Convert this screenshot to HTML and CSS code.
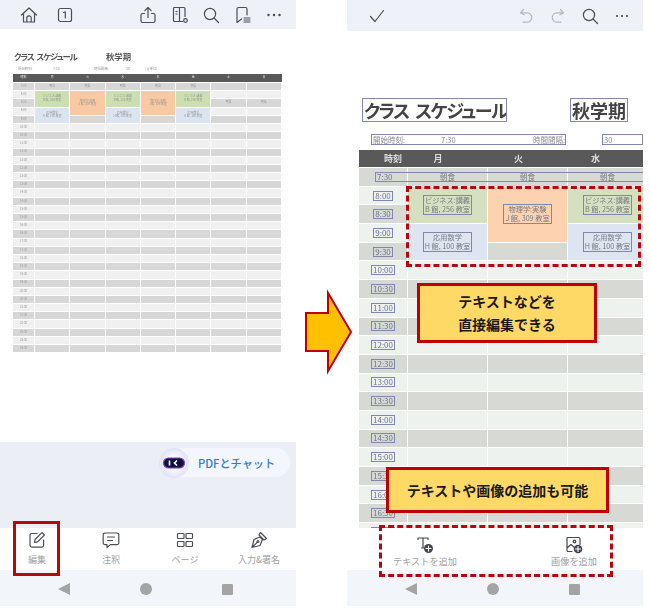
FILE: index.html
```html
<!DOCTYPE html>
<html lang="ja">
<head>
<meta charset="utf-8">
<title>PDF 編集</title>
<link rel="stylesheet" href="styles.css">
</head>
<body>
<main class="stage">

<section class="phone">
  <header class="topbar topbar-left">
    <div class="group group-a">
      <svg class="ico" viewBox="0 0 18 18"><path d="M1.500 9 9 2l7.500 7M3.500 7.500V16h11V7.500M6.800 16v-4a2.200 2.200 0 0 1 4.400 0v4"/></svg>
      <svg class="ico" viewBox="0 0 18 18"><rect x="2.500" y="2.500" width="13" height="13" rx="2"/><path d="M7.500 6.500 9.300 5.800V12"/></svg>
    </div>
    <div class="group group-b">
      <svg class="ico" viewBox="0 0 18 18"><path d="M9 11.500V1.500M5.800 4.700 9 1.500l3.200 3.200M5.500 7.500H3.500a1.500 1.500 0 0 0-1.500 1.500v6a1.500 1.500 0 0 0 1.500 1.500h11a1.500 1.500 0 0 0 1.500-1.500V9a1.500 1.500 0 0 0-1.500-1.500h-2"/></svg>
      <svg class="ico" viewBox="0 0 18 18"><path d="M12 15.500H3.500a1 1 0 0 1-1-1v-12a1 1 0 0 1 1-1h9.500a1 1 0 0 1 1 1v8M8.500 1.500v14M5 5.500h1.200M5 8h1.200"/><circle cx="14.500" cy="14.500" r="1.800"/></svg>
      <svg class="ico" viewBox="0 0 18 18"><circle cx="8" cy="8" r="5.600"/><path d="m12 12 4.500 4.500"/></svg>
      <svg class="ico" viewBox="0 0 18 18"><path d="M7.500 13 3 16.500V3a1.500 1.500 0 0 1 1.500-1.500h7A1.500 1.500 0 0 1 13 3v6M10 12h6M10 14h6M10 16h6"/></svg>
      <svg class="ico" viewBox="0 0 18 18"><circle class="dot" cx="3.500" cy="9" r="1.200"/><circle class="dot" cx="9" cy="9" r="1.200"/><circle class="dot" cx="14.500" cy="9" r="1.200"/></svg>
    </div>
  </header>

  <div class="doc doc-small">
    <div class="titles-s"><h1>クラス スケジュール</h1><h2>秋学期</h2></div>
    <div class="meta-s"><span>開始時刻:</span><span>7:30</span><span>時間間隔:</span><span>30</span><span>(分単位)</span></div>
    <div class="grid-s">
      <b class="hd">時刻</b><b class="hd">月</b><b class="hd">火</b><b class="hd">水</b><b class="hd">木</b><b class="hd">金</b><b class="hd">土</b><b class="hd">日</b>
      <i class="g">7:30</i><i class="g">朝食</i><i class="g">朝食</i><i class="g">朝食</i><i class="g">朝食</i><i class="g">朝食</i><i class="g"></i><i class="g"></i>
      <i class="l">8:00</i><i class="green r2">ビジネス:講義<br>B 館, 256 教室</i><i class="orange r3">物理学:実験<br>J 館, 309 教室</i><i class="green r2">ビジネス:講義<br>B 館, 256 教室</i><i class="orange r3">物理学:実験<br>J 館, 309 教室</i><i class="green r2">ビジネス:講義<br>B 館, 256 教室</i><i class="l"></i><i class="l"></i>
      <i class="g">8:30</i><i class="g">朝食</i><i class="g">朝食</i>
      <i class="l">9:00</i><i class="blue r2">応用数学<br>H 館, 100 教室</i><i class="blue r2">応用数学<br>H 館, 100 教室</i><i class="blue r2">応用数学<br>H 館, 100 教室</i><i class="l"></i><i class="l"></i>
      <i class="g">9:30</i><i class="g"></i><i class="g"></i><i class="g"></i><i class="g"></i>
      <i class="l">10:00</i><i class="l"></i><i class="l"></i><i class="l"></i><i class="l"></i><i class="l"></i><i class="l"></i><i class="l"></i>
      <i class="g">10:30</i><i class="g"></i><i class="g"></i><i class="g"></i><i class="g"></i><i class="g"></i><i class="g"></i><i class="g"></i>
      <i class="l">11:00</i><i class="l"></i><i class="l"></i><i class="l"></i><i class="l"></i><i class="l"></i><i class="l"></i><i class="l"></i>
      <i class="g">11:30</i><i class="g"></i><i class="g"></i><i class="g"></i><i class="g"></i><i class="g"></i><i class="g"></i><i class="g"></i>
      <i class="l">12:00</i><i class="l"></i><i class="l"></i><i class="l"></i><i class="l"></i><i class="l"></i><i class="l"></i><i class="l"></i>
      <i class="g">12:30</i><i class="g"></i><i class="g"></i><i class="g"></i><i class="g"></i><i class="g"></i><i class="g"></i><i class="g"></i>
      <i class="l">13:00</i><i class="l"></i><i class="l"></i><i class="l"></i><i class="l"></i><i class="l"></i><i class="l"></i><i class="l"></i>
      <i class="g">13:30</i><i class="g"></i><i class="g"></i><i class="g"></i><i class="g"></i><i class="g"></i><i class="g"></i><i class="g"></i>
      <i class="l">14:00</i><i class="l"></i><i class="l"></i><i class="l"></i><i class="l"></i><i class="l"></i><i class="l"></i><i class="l"></i>
      <i class="g">14:30</i><i class="g"></i><i class="g"></i><i class="g"></i><i class="g"></i><i class="g"></i><i class="g"></i><i class="g"></i>
      <i class="l">15:00</i><i class="l"></i><i class="l"></i><i class="l"></i><i class="l"></i><i class="l"></i><i class="l"></i><i class="l"></i>
      <i class="g">15:30</i><i class="g"></i><i class="g"></i><i class="g"></i><i class="g"></i><i class="g"></i><i class="g"></i><i class="g"></i>
      <i class="l">16:00</i><i class="l"></i><i class="l"></i><i class="l"></i><i class="l"></i><i class="l"></i><i class="l"></i><i class="l"></i>
      <i class="g">16:30</i><i class="g"></i><i class="g"></i><i class="g"></i><i class="g"></i><i class="g"></i><i class="g"></i><i class="g"></i>
      <i class="l">17:00</i><i class="l"></i><i class="l"></i><i class="l"></i><i class="l"></i><i class="l"></i><i class="l"></i><i class="l"></i>
      <i class="g">17:30</i><i class="g"></i><i class="g"></i><i class="g"></i><i class="g"></i><i class="g"></i><i class="g"></i><i class="g"></i>
      <i class="l">18:00</i><i class="l"></i><i class="l"></i><i class="l"></i><i class="l"></i><i class="l"></i><i class="l"></i><i class="l"></i>
      <i class="g">18:30</i><i class="g"></i><i class="g"></i><i class="g"></i><i class="g"></i><i class="g"></i><i class="g"></i><i class="g"></i>
      <i class="l">19:00</i><i class="l"></i><i class="l"></i><i class="l"></i><i class="l"></i><i class="l"></i><i class="l"></i><i class="l"></i>
      <i class="g">19:30</i><i class="g"></i><i class="g"></i><i class="g"></i><i class="g"></i><i class="g"></i><i class="g"></i><i class="g"></i>
      <i class="l">20:00</i><i class="l"></i><i class="l"></i><i class="l"></i><i class="l"></i><i class="l"></i><i class="l"></i><i class="l"></i>
      <i class="g">20:30</i><i class="g"></i><i class="g"></i><i class="g"></i><i class="g"></i><i class="g"></i><i class="g"></i><i class="g"></i>
      <i class="l">21:00</i><i class="l"></i><i class="l"></i><i class="l"></i><i class="l"></i><i class="l"></i><i class="l"></i><i class="l"></i>
      <i class="g">21:30</i><i class="g"></i><i class="g"></i><i class="g"></i><i class="g"></i><i class="g"></i><i class="g"></i><i class="g"></i>
      <i class="l">22:00</i><i class="l"></i><i class="l"></i><i class="l"></i><i class="l"></i><i class="l"></i><i class="l"></i><i class="l"></i>
      <i class="g">22:30</i><i class="g"></i><i class="g"></i><i class="g"></i><i class="g"></i><i class="g"></i><i class="g"></i><i class="g"></i>
      <i class="l">23:00</i><i class="l"></i><i class="l"></i><i class="l"></i><i class="l"></i><i class="l"></i><i class="l"></i><i class="l"></i>
      <i class="g">23:30</i><i class="g"></i><i class="g"></i><i class="g"></i><i class="g"></i><i class="g"></i><i class="g"></i><i class="g"></i>
    </div>
  </div>

  <div class="chat-zone">
    <div class="chat-pill">
      <span class="avatar"><svg viewBox="0 0 30 30"><rect x="4.500" y="10" width="21" height="10" rx="5" class="av-body"/><path d="M10.500 12.500v5M18 12.500 15.500 15l2.500 2.500" class="av-mark"/></svg></span>
      <span class="chat-text">PDFとチャット</span>
    </div>
  </div>

  <nav class="tabs">
    <div class="tab"><svg class="ico" viewBox="0 0 18 18"><path d="M9 2.500H3.800A1.800 1.800 0 0 0 2 4.300v10a1.800 1.800 0 0 0 1.800 1.800h10a1.800 1.800 0 0 0 1.800-1.800V9M6.500 11.500l.6-3L14 1.600l2.400 2.400-6.900 6.900z"/></svg><span>編集</span></div>
    <div class="tab"><svg class="ico" viewBox="0 0 18 18"><path d="M3 2h12a1.800 1.800 0 0 1 1.800 1.800v8a1.800 1.800 0 0 1-1.800 1.800H8.500L5 16.500v-2.900H3a1.800 1.800 0 0 1-1.800-1.800v-8A1.800 1.800 0 0 1 3 2zM5.500 6h7M5.500 9.500h5"/></svg><span>注釈</span></div>
    <div class="tab"><svg class="ico" viewBox="0 0 18 18"><rect x="1.500" y="2.500" width="6.500" height="5" rx=".8"/><rect x="10" y="2.500" width="6.500" height="5" rx=".8"/><rect x="1.500" y="10.500" width="6.500" height="5" rx=".8"/><rect x="10" y="10.500" width="6.500" height="5" rx=".8"/></svg><span>ページ</span></div>
    <div class="tab"><svg class="ico" viewBox="0 0 18 18"><path d="m2 16.500 2-8 6-2.500 2.500 2.500-2.500 6zM2 16.500 7 11.500M10.500 1.500l6 6-2.500 1.500-5-5z"/><circle cx="8" cy="10.500" r="1"/></svg><span>入力&amp;署名</span></div>
  </nav>

  <div class="sysnav">
    <svg class="nav-tri" viewBox="0 0 12 12"><path d="M12 0v12L0 6z"/></svg>
    <span class="nav-dot"></span>
    <span class="nav-sq"></span>
  </div>

  <div class="mark-edit"></div>
</section>

<div class="arrow-col">
  <svg class="arrow" viewBox="0 0 51 84"><path d="M10 22h22V2l23 39-23 39V60H10z"/></svg>
</div>

<section class="phone">
  <header class="topbar topbar-right">
    <div class="group group-a2">
      <svg class="ico" viewBox="0 0 18 18"><path d="m2.500 9.500 4.500 5 8.500-11"/></svg>
    </div>
    <div class="group group-c">
      <svg class="ico ico-off" viewBox="0 0 18 18"><path d="M6.500 2.500 3.500 5.800l3.500 2M4 5.800h6a4.700 4.700 0 0 1 0 9.400H6"/></svg>
      <svg class="ico ico-off" viewBox="0 0 18 18"><path d="M11.500 2.500l3 3.300-3.500 2M14 5.800H8a4.700 4.700 0 0 0 0 9.400h4"/></svg>
      <svg class="ico" viewBox="0 0 18 18"><circle cx="8" cy="8" r="5.600"/><path d="m12 12 4.500 4.500"/></svg>
      <svg class="ico" viewBox="0 0 18 18"><circle class="dot" cx="4" cy="9" r="1.100"/><circle class="dot" cx="9" cy="9" r="1.100"/><circle class="dot" cx="14" cy="9" r="1.100"/></svg>
    </div>
  </header>

  <div class="doc doc-large">
    <div class="titles-l"><h1>クラス スケジュール</h1><h2>秋学期</h2></div>
    <div class="meta-l">
      <div class="meta-box"><span>開始時刻:</span><span>7:30</span><span>時間間隔:</span></div>
      <div class="meta-val">30</div>
    </div>
    <div class="grid-l">
      <b class="hd t-r">時刻</b><b class="hd t-m">月</b><b class="hd t-k">火</b><b class="hd t-s">水</b>
      <i class="g"></i><i class="g">朝食</i><i class="g">朝食</i><i class="g">朝食</i>
      <i class="l"><u>8:00</u></i><i class="green r2"><u class="fld">ビジネス:講義<br>B 館, 256 教室</u></i><i class="orange r3"><u class="fld">物理学:実験<br>J 館, 309 教室</u></i><i class="green r2"><u class="fld">ビジネス:講義<br>B 館, 256 教室</u></i>
      <i class="g"><u>8:30</u></i>
      <i class="l"><u>9:00</u></i><i class="blue r2"><u class="fld">応用数学<br>H 館, 100 教室</u></i><i class="blue r2"><u class="fld">応用数学<br>H 館, 100 教室</u></i>
      <i class="g"><u>9:30</u></i><i class="g"></i>
      <i class="l"><u>10:00</u></i><i class="l"></i><i class="l"></i><i class="l"></i>
      <i class="g"><u>10:30</u></i><i class="g"></i><i class="g"></i><i class="g"></i>
      <i class="l"><u>11:00</u></i><i class="l"></i><i class="l"></i><i class="l"></i>
      <i class="g"><u>11:30</u></i><i class="g"></i><i class="g"></i><i class="g"></i>
      <i class="l"><u>12:00</u></i><i class="l"></i><i class="l"></i><i class="l"></i>
      <i class="g"><u>12:30</u></i><i class="g"></i><i class="g"></i><i class="g"></i>
      <i class="l"><u>13:00</u></i><i class="l"></i><i class="l"></i><i class="l"></i>
      <i class="g"><u>13:30</u></i><i class="g"></i><i class="g"></i><i class="g"></i>
      <i class="l"><u>14:00</u></i><i class="l"></i><i class="l"></i><i class="l"></i>
      <i class="g"><u>14:30</u></i><i class="g"></i><i class="g"></i><i class="g"></i>
      <i class="l"><u>15:00</u></i><i class="l"></i><i class="l"></i><i class="l"></i>
      <i class="g"><u>15:30</u></i><i class="g"></i><i class="g"></i><i class="g"></i>
      <i class="l"><u>16:00</u></i><i class="l"></i><i class="l"></i><i class="l"></i>
      <i class="g"><u>16:30</u></i><i class="g"></i><i class="g"></i><i class="g"></i>
      <i class="l"><u>17:00</u></i><i class="l"></i><i class="l"></i><i class="l"></i>
      <div class="row-frame">7:30</div>
    </div>
  </div>

  <nav class="tabs tabs-add">
    <div class="tab tab-add"><svg class="ico ico-dark" viewBox="0 0 18 18"><path d="M2 3.500V2h10v1.500M7 2v10M5.500 12h3"/><circle class="dot" cx="12.500" cy="12.500" r="4.500"/><path class="plus" d="M12.500 10v5M10 12.500h5"/></svg><span>テキストを追加</span></div>
    <div class="tab tab-add"><svg class="ico ico-dark" viewBox="0 0 18 18"><path d="M7 15.500H3a1 1 0 0 1-1-1v-12a1 1 0 0 1 1-1h11a1 1 0 0 1 1 1v6M2 12l4-3.500 3.500 3"/><circle cx="9.500" cy="5.500" r="1.300"/><circle class="dot" cx="13" cy="13" r="4.300"/><path class="plus" d="M13 10.500v5M10.500 13h5"/></svg><span>画像を追加</span></div>
  </nav>

  <div class="sysnav">
    <svg class="nav-tri" viewBox="0 0 12 12"><path d="M12 0v12L0 6z"/></svg>
    <span class="nav-dot"></span>
    <span class="nav-sq"></span>
  </div>

  <div class="dash dash-top"></div>
  <div class="dash dash-bottom"></div>
  <div class="callout callout-top">テキストなどを<br>直接編集できる</div>
  <div class="callout callout-bottom">テキストや画像の追加も可能</div>
</section>

</main>
</body>
</html>
```

FILE: styles.css
```css
* { box-sizing: border-box; }

html, body {
  margin: 0;
  padding: 0;
  background: #fff;
}

body {
  font-family: "Noto Sans CJK JP", "Noto Sans", sans-serif;
  color: #444;
}

.stage {
  display: flex;
  width: 650px;
  height: 611px;
  overflow: hidden;
}

.phone {
  position: relative;
  display: flex;
  flex-direction: column;
  flex: none;
  width: 296px;
  height: 606px;
  overflow: hidden;
  background: #fff;
}

/* top bars */
.topbar {
  display: flex;
  flex: none;
  align-items: center;
  justify-content: space-between;
  background: #eef2f8;
}

.topbar-left { height: 29px; padding: 0 13px 0 20px; }
.topbar-right { height: 31px; padding: 0 12px 0 21px; }

.group { display: flex; align-items: center; }
.group-a { gap: 18px; }
.group-b { gap: 13.5px; }
.group-c { gap: 14px; }

.ico {
  flex: none;
  width: 18px;
  height: 18px;
  fill: none;
  stroke: #4b4f55;
  stroke-width: 1.2;
  stroke-linecap: round;
  stroke-linejoin: round;
}

.ico-off { stroke: #b4b8bc; }
.ico-dark { stroke: #44484e; }
.dot { fill: #44484e; stroke: none; }
.plus { stroke: #fff; stroke-width: 1.1; }

/* document areas */
.doc {
  flex: 1;
  min-height: 0;
  overflow: hidden;
  background: #fff;
}

.doc-small { padding: 21px 15px 0 13px; filter: blur(.45px); }
.doc-large { padding: 67px 0 0 12px; filter: blur(.3px); }

/* small preview */
.titles-s {
  display: flex;
  height: 13px;
  padding-left: 1px;
  align-items: center;
  font-feature-settings: "palt";
}

.titles-s h1, .titles-s h2 {
  margin: 0;
  font-size: 8.400px;
  line-height: 13px;
  font-weight: 700;
  color: #555;
  white-space: nowrap;
}

.titles-s h1 { width: 92px; letter-spacing: -1.1px; word-spacing: 2px; }

.meta-s {
  display: grid;
  grid-template-columns: 35px 41px 32px 19px auto;
  height: 11px;
  padding: 4px 0 0 5px;
  font-size: 3.400px;
  line-height: 4px;
  color: #999;
}

.grid-s {
  display: grid;
  grid-template-columns: 21px repeat(7, 1fr);
  grid-template-rows: 8px repeat(33, 7.200px);
  gap: 1px;
  height: 280px;
  font-size: 2.900px;
  line-height: 3.400px;
  text-align: center;
  color: #999;
}

.grid-s > *, .grid-l > * {
  display: flex;
  align-items: center;
  justify-content: center;
  font-style: normal;
  font-weight: 400;
  min-width: 0;
}

.hd { background: #595959; color: #e8e8e8; box-shadow: 1px 0 0 #595959; }
.g { background: #d7d7d7; }
.l { background: #f0f0f0; }
.green { background: #cbdfb0; }
.orange { background: #f8c9a2; }
.blue { background: #dbe5f1; }
.r2 { grid-row: span 2; }
.r3 { grid-row: span 3; }

/* large page */
.titles-l {
  display: flex;
  align-items: flex-start;
  height: 36px;
  padding-left: 3px;
  font-feature-settings: "palt";
}

.titles-l h1, .titles-l h2 {
  margin: 0;
  height: 24px;
  border: 1px solid #8187ad;
  font-size: 18px;
  line-height: 22px;
  font-weight: 700;
  color: #444;
  white-space: nowrap;
}

.titles-l h1 { width: 145px; margin-right: 63px; padding-left: 1px; letter-spacing: -1.500px; word-spacing: 4px; overflow: hidden; }
.titles-l h2 { width: 58px; text-align: center; overflow: hidden; }

.meta-l {
  display: flex;
  height: 16px;
  padding-left: 12px;
  font-size: 7.500px;
  line-height: 9px;
  color: #8a8a92;
  font-feature-settings: "palt";
  white-space: nowrap;
}

.meta-box {
  display: grid;
  grid-template-columns: 68px 92px auto;
  width: 195px;
  height: 11px;
  padding: 0 1px;
  border: 1px solid #8187ad;
}

.meta-val {
  width: 60px;
  height: 11px;
  margin-left: 36px;
  padding-left: 1px;
  border: 1px solid #8187ad;
}

.grid-l {
  position: relative;
  display: grid;
  grid-template-columns: 48px repeat(3, 79px);
  grid-template-rows: 17px repeat(20, 17.700px);
  gap: 1px;
  font-size: 7.500px;
  line-height: 9.500px;
  text-align: center;
  color: #7d8088;
}

.grid-l .g { background: #d6d9d4; }
.grid-l .l { background: #eef2ee; }
.grid-l .green { background: #d5e0c0; }
.grid-l .orange { background: #fdd2b0; }
.grid-l .blue { background: #dce5f0; }

.grid-l .hd { background: #595959; color: #ddd; font-size: 9px; font-weight: 700; }
.grid-l .t-r { padding-left: 20px; }
.grid-l .t-m { padding-right: 19px; }
.grid-l .t-k { padding-right: 18px; }
.grid-l .t-s { padding-right: 24px; }

.grid-l u {
  display: block;
  padding: 0 1px;
  border: 1px solid #7f86b0;
  font-size: 8px;
  line-height: 8px;
  text-decoration: none;
  color: #70748c;
  white-space: nowrap;
}

.grid-l u.fld {
  width: 49px;
  padding: 0;
  font-size: 7.200px;
  line-height: 9px;
  text-align: center;
  overflow: hidden;
  color: #777c84;
}

.row-frame {
  position: absolute;
  left: 16px;
  right: -20px;
  top: 22px;
  height: 10px;
  justify-content: flex-start !important;
  padding-left: 1px;
  border: 1px solid #8187ad;
  font-size: 8px;
  line-height: 8px;
  color: #70748c;
  background: none;
}

/* AI pill */
.chat-zone {
  display: flex;
  flex: none;
  justify-content: flex-end;
  height: 86px;
  padding: 6px 6px 0 0;
  background: #ebeff5;
}

.chat-pill {
  display: flex;
  align-items: center;
  width: 131px;
  height: 29px;
  border-radius: 15px;
  background: #f3f6fc;
}

.avatar {
  display: block;
  flex: none;
  width: 30px;
  height: 30px;
  margin-right: 9px;
  border-radius: 50%;
  background: radial-gradient(circle at 50% 50%, #f6f7fc 35%, #c9d1f2 100%);
}

.avatar svg { display: block; width: 30px; height: 30px; }
.av-body { fill: #10123a; stroke: #8a3fc0; stroke-width: 1.200; }
.av-mark { fill: none; stroke: #fff; stroke-width: 1.600; }

.chat-text {
  font-size: 11.200px;
  line-height: 16px;
  font-weight: 500;
  color: #2f7bd0;
  white-space: nowrap;
}

/* bottom tabs */
.tabs {
  display: grid;
  flex: none;
  grid-template-columns: repeat(4, 1fr);
  height: 42px;
  background: #fff;
}

.tabs-add {
  display: flex;
  justify-content: space-between;
  padding: 8px 30px 0 39px;
}

.tab {
  display: flex;
  flex-direction: column;
  align-items: center;
  padding-top: 3px;
  font-size: 9px;
  line-height: 12px;
  color: #a2a2a2;
  white-space: nowrap;
}

.tab .ico { margin-bottom: 5px; }
.tab-add { width: 78px; padding-top: 0; font-size: 9.200px; }
.tab-add .ico { margin-bottom: 1px; }

/* system navigation */
.sysnav {
  display: flex;
  flex: none;
  align-items: center;
  gap: 70px;
  height: 36px;
  padding: 2px 0 0 58px;
  background: #f2f5fa;
}

.nav-tri { width: 12px; height: 12px; fill: #a4a4a4; }
.nav-dot { width: 12px; height: 12px; border-radius: 50%; background: #a4a4a4; }
.nav-sq { width: 11px; height: 11px; border-radius: 1px; background: #a4a4a4; }

/* arrow */
.arrow-col {
  position: relative;
  z-index: 1;
  display: flex;
  flex: none;
  align-items: flex-start;
  width: 51px;
  padding-top: 291px;
}

.arrow {
  display: block;
  overflow: visible;
  width: 51px;
  height: 84px;
  fill: #ffc000;
  stroke: #c00000;
  stroke-width: 2;
}

/* annotations */
.mark-edit {
  position: absolute;
  left: 13px;
  top: 521px;
  width: 47px;
  height: 55px;
  border: 3px solid #b40a0a;
}

.dash {
  position: absolute;
  border: 3px dashed #b8050f;
}

.dash-top { left: 59px; top: 186px; width: 235px; height: 81px; }
.dash-bottom { left: 32px; top: 525px; width: 234px; height: 52px; }

.callout {
  position: absolute;
  display: flex;
  align-items: center;
  justify-content: center;
  border: 3px solid #c00000;
  background: #ffd966;
  color: #1a1a1a;
  font-size: 14px;
  font-weight: 700;
  text-align: center;
}

.callout-top { left: 70px; top: 283px; width: 180px; height: 60px; line-height: 23px; }
.callout-bottom { left: 39px; top: 467px; width: 223px; height: 46px; line-height: 20px; }
```
